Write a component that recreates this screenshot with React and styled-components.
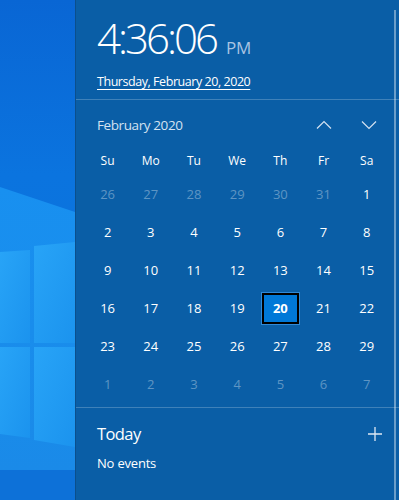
import React from 'react';
import styled, { createGlobalStyle } from 'styled-components';

const GlobalStyle = createGlobalStyle`
  html, body {
    margin: 0;
    padding: 0;
    width: 399px;
    height: 500px;
    overflow: hidden;
    font-family: "Open Sans", "Noto Sans", sans-serif;
  }
`;

const Screen = styled.div`
  display: flex;
  width: 399px;
  height: 500px;
`;

const Desktop = styled.div`
  width: 75px;
  flex-shrink: 0;
  svg { display: block; }
`;

const Flyout = styled.div`
  position: relative;
  flex: 1;
  display: flex;
  flex-direction: column;
  background: #0a5ea6;
  border-left: 1px solid #0b4f8c;
  color: #fff;
`;

const Scrollbar = styled.div`
  position: absolute;
  right: 3px;
  top: 10px;
  bottom: 0;
  width: 2px;
  background: rgba(255, 255, 255, 0.4);
`;

const ClockBlock = styled.div`
  height: 100px;
  padding-left: 21px;
  border-bottom: 1px solid rgba(255, 255, 255, 0.22);
  box-sizing: border-box;
  padding-top: 15px;
`;

const Time = styled.div`
  display: flex;
  align-items: baseline;
  line-height: 46px;
`;

const Digits = styled.span`
  font-size: 42px;
  font-weight: 300;
  letter-spacing: -3px;
`;

const Meridiem = styled.span`
  font-size: 17px;
  margin-left: 10px;
  color: #a9c4e2;
`;

const DateLink = styled.div`
  font-size: 12.5px;
  margin-top: 2px;
  text-decoration: underline;
  text-underline-offset: 3px;
  letter-spacing: -0.45px;
`;

const CalendarBlock = styled.div`
  padding: 0 0 0 10px;
  height: 308px;
  border-bottom: 1px solid rgba(255, 255, 255, 0.22);
  box-sizing: border-box;
`;

const MonthRow = styled.div`
  display: flex;
  align-items: center;
  height: 40px;
  margin-top: 5px;
  padding-left: 11px;
`;

const MonthTitle = styled.div`
  flex: 1;
  font-size: 13.5px;
  letter-spacing: -0.4px;
  color: #d4e2f1;
`;

const NavButton = styled.button`
  width: 45px;
  height: 40px;
  border: none;
  background: none;
  padding: 0;
  display: flex;
  align-items: center;
  justify-content: center;
  color: #d4e2f1;
  margin-right: ${p => p.$last ? '8px' : '0'};
`;

const Grid = styled.div`
  display: grid;
  grid-template-columns: repeat(7, 43.2px);
  grid-template-rows: 30px;
  grid-auto-rows: 38px;
`;

const DayName = styled.div`
  display: flex;
  align-items: center;
  justify-content: center;
  font-size: 12px;
`;

const Day = styled.div`
  display: flex;
  align-items: center;
  justify-content: center;
  font-size: 13px;
  color: ${p => (p.$muted ? 'rgba(255,255,255,0.35)' : '#fff')};
`;

const Selected = styled.div`
  width: 39px;
  height: 33px;
  box-sizing: border-box;
  border: 1px solid #2f8ad9;
  display: flex;
`;

const SelectedInner = styled.div`
  flex: 1;
  border: 2px solid #000;
  background: #0078d7;
  display: flex;
  align-items: center;
  justify-content: center;
  font-weight: 700;
`;

const Agenda = styled.div`
  padding: 14px 0 0 21px;
`;

const AgendaHead = styled.div`
  display: flex;
  align-items: center;
  justify-content: space-between;
  padding-right: 17px;
`;

const AgendaTitle = styled.div`
  font-size: 16.5px;
  letter-spacing: -0.6px;
`;

const AgendaNote = styled.div`
  font-size: 13px;
  letter-spacing: -0.2px;
  margin-top: 9px;
`;

const Chevron = ({ up }) => (
  <svg width="16" height="10" viewBox="0 0 16 10" fill="none" stroke="currentColor" strokeWidth="1.2">
    {up ? <path d="M1 8.5 L8 1.5 L15 8.5" /> : <path d="M1 1.5 L8 8.5 L15 1.5" />}
  </svg>
);

const Plus = () => (
  <svg width="14" height="14" viewBox="0 0 14 14" stroke="#dfe9f4" strokeWidth="1.3">
    <path d="M7 0 V14 M0 7 H14" />
  </svg>
);

const Wallpaper = () => (
  <svg width="75" height="500" viewBox="0 0 75 500">
    <defs>
      <linearGradient id="sky" x1="0" y1="0" x2="0" y2="1">
        <stop offset="0" stopColor="#0966d4" />
        <stop offset="0.35" stopColor="#0b74df" />
        <stop offset="1" stopColor="#0b6fd6" />
      </linearGradient>
      <linearGradient id="beam" x1="0" y1="0" x2="0" y2="1">
        <stop offset="0" stopColor="#1890f0" />
        <stop offset="1" stopColor="#1a8ae8" />
      </linearGradient>
      <linearGradient id="pane" x1="0" y1="0" x2="1" y2="1">
        <stop offset="0" stopColor="#28a4f7" />
        <stop offset="1" stopColor="#1b93ee" />
      </linearGradient>
    </defs>
    <rect width="75" height="500" fill="url(#sky)" />
    <polygon points="0,187 75,212 75,470 0,470" fill="url(#beam)" />
    <polygon points="0,252 30,250 30,343 0,343" fill="url(#pane)" />
    <polygon points="34,246 75,242 75,343 34,343" fill="url(#pane)" />
    <polygon points="0,347 30,347 30,438 0,434" fill="url(#pane)" />
    <polygon points="34,347 75,347 75,447 34,440" fill="url(#pane)" />
    <polygon points="0,470 75,470 75,500 0,500" fill="#0d71d8" />
  </svg>
);

const prev = [26, 27, 28, 29, 30, 31];
const next = [1, 2, 3, 4, 5, 6, 7];
const names = ['Su', 'Mo', 'Tu', 'We', 'Th', 'Fr', 'Sa'];

export default function App() {
  const days = [];
  prev.forEach(d => days.push({ d, muted: true }));
  for (let d = 1; d <= 29; d++) days.push({ d });
  next.forEach(d => days.push({ d, muted: true }));

  return (
    <>
      <GlobalStyle />
      <Screen>
        <Desktop>
          <Wallpaper />
        </Desktop>
        <Flyout>
          <ClockBlock>
            <Time>
              <Digits>4:36:06</Digits>
              <Meridiem>PM</Meridiem>
            </Time>
            <DateLink>Thursday, February 20, 2020</DateLink>
          </ClockBlock>
          <CalendarBlock>
            <MonthRow>
              <MonthTitle>February 2020</MonthTitle>
              <NavButton><Chevron up /></NavButton>
              <NavButton $last><Chevron /></NavButton>
            </MonthRow>
            <Grid>
              {names.map(n => <DayName key={n}>{n}</DayName>)}
              {days.map((x, i) => (
                <Day key={i} $muted={x.muted}>
                  {x.d === 20 && !x.muted ? (
                    <Selected><SelectedInner>20</SelectedInner></Selected>
                  ) : x.d}
                </Day>
              ))}
            </Grid>
          </CalendarBlock>
          <Agenda>
            <AgendaHead>
              <AgendaTitle>Today</AgendaTitle>
              <Plus />
            </AgendaHead>
            <AgendaNote>No events</AgendaNote>
          </Agenda>
          <Scrollbar />
        </Flyout>
      </Screen>
    </>
  );
}
